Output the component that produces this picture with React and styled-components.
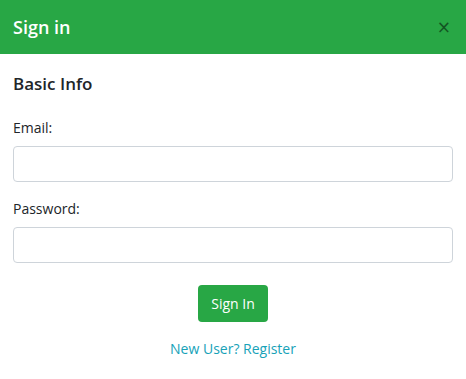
import styled, { createGlobalStyle } from "styled-components";

const GlobalStyle = createGlobalStyle`
  * { box-sizing: border-box; }
  body {
    margin: 0;
    background: #fff;
    font-family: "Open Sans", "Noto Sans", sans-serif;
    color: #212529;
  }
`;

const Modal = styled.div`
  width: 466px;
  height: 379px;
  background: #fff;
  display: flex;
  flex-direction: column;
`;

const Header = styled.div`
  height: 54px;
  background: #28a745;
  display: flex;
  align-items: center;
  justify-content: space-between;
  padding: 0 15px 0 13px;
`;

const Title = styled.h4`
  margin: 0;
  color: #fff;
  font-size: 18px;
  font-weight: 600;
`;

const Close = styled.button`
  border: none;
  background: none;
  padding: 0;
  color: #000;
  opacity: 0.5;
  font-size: 17px;
  line-height: 1;
  font-family: "DejaVu Sans", sans-serif;
`;

const Body = styled.div`
  padding: 16px 13px;
  display: flex;
  flex-direction: column;
`;

const Section = styled.h5`
  margin: 2px 0 23px;
  font-size: 17px;
  font-weight: 600;
  color: #212529;
`;

const Field = styled.div`
  display: flex;
  flex-direction: column;
  margin-bottom: 17px;
`;

const Label = styled.label`
  font-size: 14px;
  color: #212529;
  margin-bottom: 9px;
`;

const Input = styled.input`
  height: 36px;
  border: 1px solid #ced4da;
  border-radius: 4px;
  padding: 6px 12px;
  font-size: 15px;
  font-family: inherit;
`;

const Actions = styled.div`
  display: flex;
  flex-direction: column;
  align-items: center;
  gap: 17px;
  margin-top: 5px;
`;

const Button = styled.button`
  background: #28a745;
  color: #fff;
  border: none;
  border-radius: 4px;
  width: 70px;
  height: 37px;
  font-size: 14px;
  font-family: inherit;
`;

const Link = styled.a`
  color: #17a2b8;
  font-size: 14px;
  text-decoration: none;
`;

export default function App() {
  return (
    <>
      <GlobalStyle />
      <Modal>
        <Header>
          <Title>Sign in</Title>
          <Close aria-label="Close">×</Close>
        </Header>
        <Body>
          <Section>Basic Info</Section>
          <Field>
            <Label>Email:</Label>
            <Input type="email" />
          </Field>
          <Field>
            <Label>Password:</Label>
            <Input type="password" />
          </Field>
          <Actions>
            <Button>Sign In</Button>
            <Link href="#">New User? Register</Link>
          </Actions>
        </Body>
      </Modal>
    </>
  );
}
